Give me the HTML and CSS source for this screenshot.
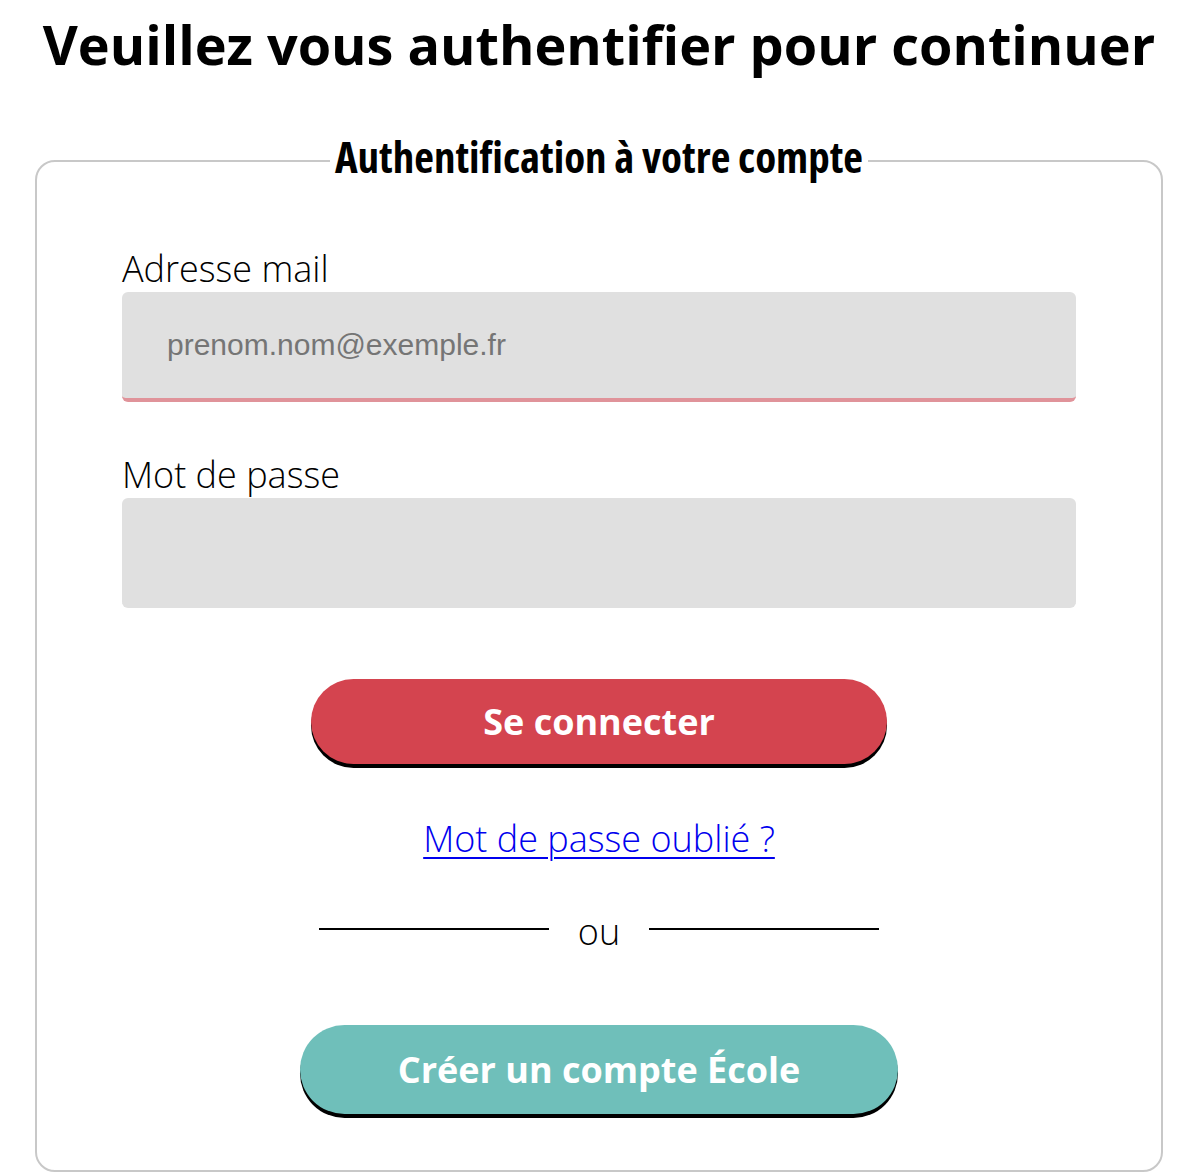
FILE: index.html
```html
<!DOCTYPE html>
<html lang="fr">
<head>
<meta charset="utf-8">
<title>Authentification</title>
<link rel="stylesheet" href="styles.css">
</head>
<body>
<h1 class="title">Veuillez vous authentifier pour continuer</h1>
<form class="login">
  <fieldset class="box">
    <legend class="box-legend">Authentification à votre compte</legend>
    <div class="field">
      <label class="field-label" for="email">Adresse mail</label>
      <input class="field-input field-input--invalid" id="email" type="email" placeholder="prenom.nom@exemple.fr">
    </div>
    <div class="field field--second">
      <label class="field-label" for="pwd">Mot de passe</label>
      <input class="field-input" id="pwd" type="password">
    </div>
    <div class="actions">
      <button type="button" class="btn btn--primary">Se connecter</button>
      <a class="forgot" href="#">Mot de passe oublié ?</a>
      <div class="separator"><span class="sep-line"></span><span class="sep-text">ou</span><span class="sep-line"></span></div>
      <button type="button" class="btn btn--secondary">Créer un compte École</button>
    </div>
  </fieldset>
</form>
</body>
</html>
```
FILE: styles.css
```css
html, body {
  margin: 0;
  padding: 0;
  background: #ffffff;
}
body {
  font-family: "Open Sans", "Liberation Sans", sans-serif;
  color: #000;
}
.title {
  margin: 8px 0 0 0;
  text-align: center;
  font-size: 54px;
  font-weight: 700;
  line-height: 72px;
  padding-left: 6px;
}
.login {
  margin: 50px 29px 0 35px;
}
.box {
  margin: 0;
  min-width: 0;
  border: 2px solid #c8c8c8;
  border-radius: 20px;
  padding: 0 85px 56px 85px;
}
.box-legend {
  margin: 0 auto;
  padding: 0 5px 8px 5px;
  font-family: "Open Sans", "Liberation Sans Narrow", sans-serif;
  font-stretch: 75%;
  font-weight: 700;
  font-size: 43px;
  line-height: 54px;
}
.field {
  display: flex;
  flex-direction: column;
  margin-top: 54px;
}
.field--second {
  margin-top: 50px;
}
.field-label {
  font-size: 36px;
  font-weight: 300;
  line-height: 46px;
}
.field-input {
  box-sizing: border-box;
  width: 100%;
  height: 110px;
  margin: 0;
  border: none;
  border-bottom: 4px solid #e0e0e0;
  border-radius: 6px;
  background: #e0e0e0;
  padding: 0 45px;
  font-family: "Liberation Sans", Arial, sans-serif;
  font-size: 30px;
  color: #333;
  outline: none;
}
.field-input--invalid {
  border-bottom-color: #e0939a;
}
.field-input::placeholder {
  color: #757575;
}
.actions {
  display: flex;
  flex-direction: column;
  align-items: center;
  margin-top: 71px;
}
.btn {
  box-sizing: border-box;
  border: none;
  border-radius: 45px;
  color: #ffffff;
  font-family: "Open Sans", "Liberation Sans", sans-serif;
  font-weight: 700;
  font-size: 36px;
  cursor: pointer;
  box-shadow: 0 4px 0 #000;
  padding: 0;
}
.btn--primary {
  width: 576px;
  height: 85px;
  background: #d4444f;
}
.btn--secondary {
  width: 598px;
  height: 89px;
  background: #6fbfba;
  margin-top: 71px;
}
.forgot {
  margin-top: 52px;
  font-size: 36px;
  font-weight: 300;
  line-height: 46px;
  color: #0000ee;
  text-decoration: underline;
  text-decoration-thickness: 2px;
  text-underline-offset: 5px;
}
.separator {
  display: flex;
  align-items: center;
  width: 560px;
  margin-top: 42px;
}
.sep-line {
  flex: 1;
  height: 2px;
  background: #000;
}
.sep-text {
  width: 100px;
  text-align: center;
  font-size: 36px;
  font-weight: 300;
  line-height: 44px;
  padding-top: 6px;
}
```
